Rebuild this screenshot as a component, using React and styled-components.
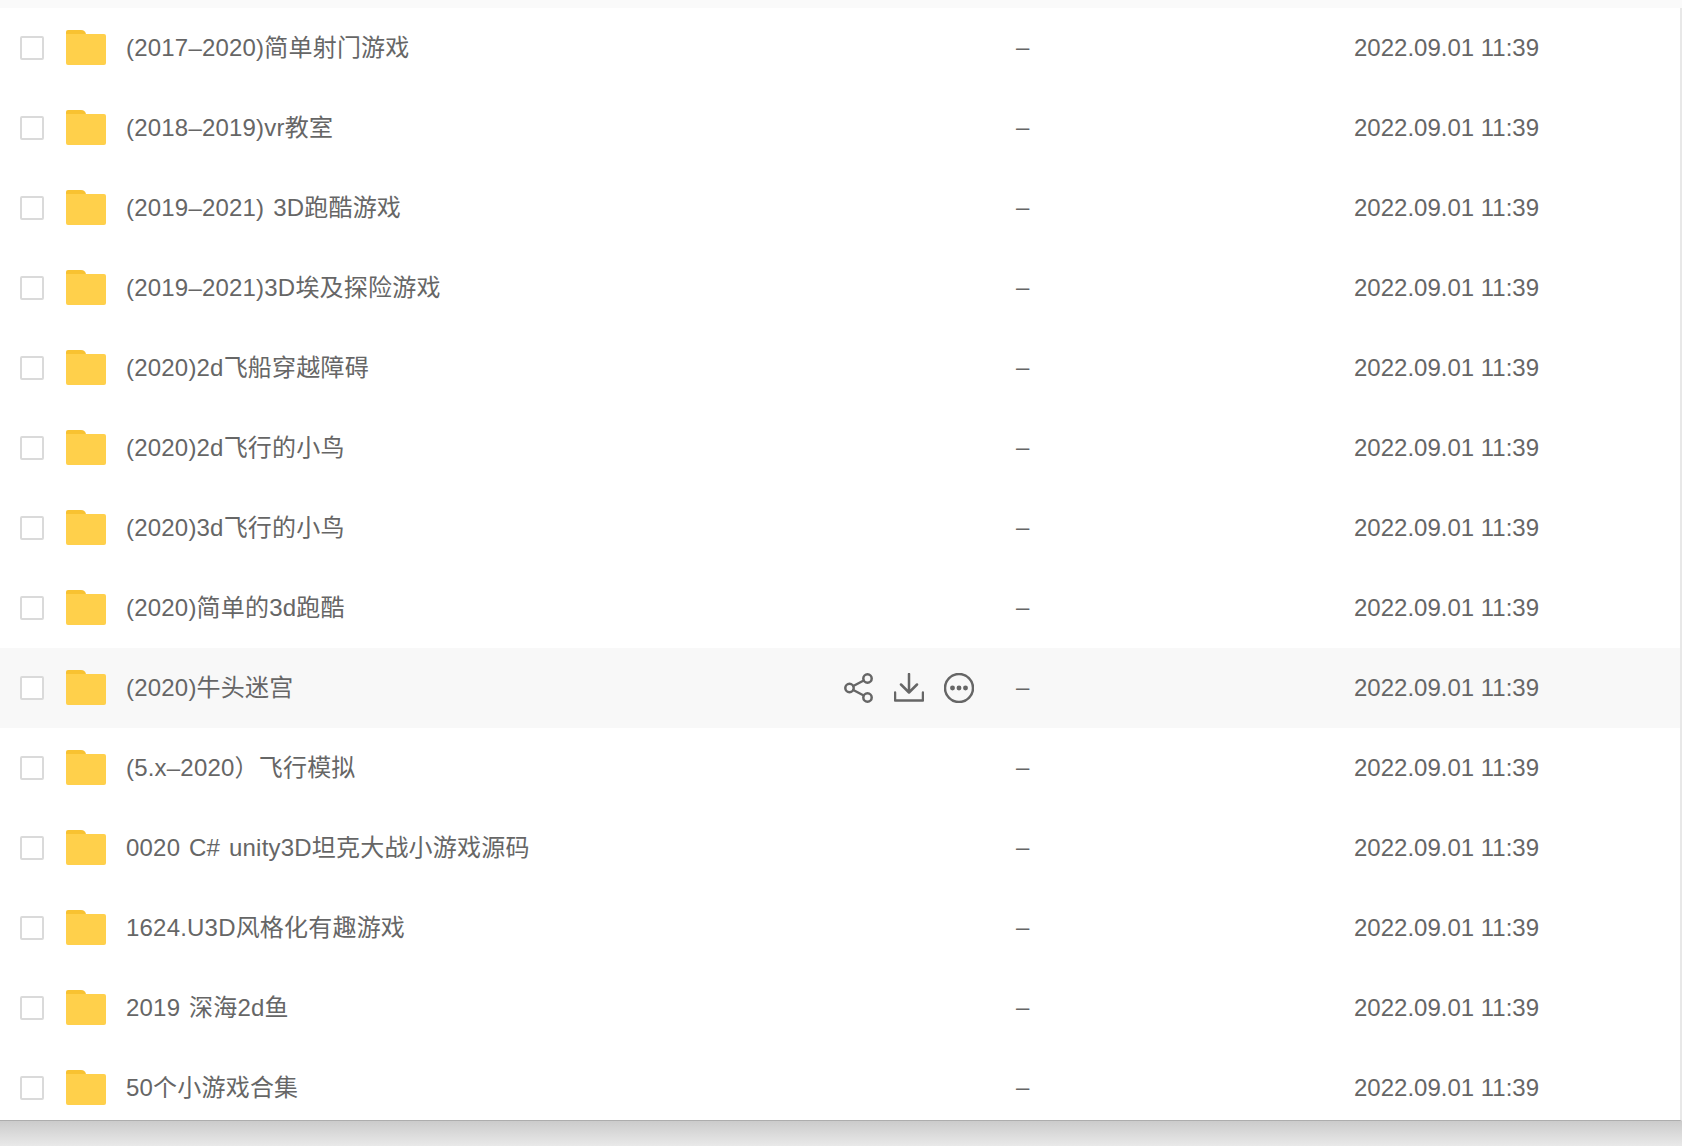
import React from 'react';
import styled, { createGlobalStyle } from 'styled-components';

const GlobalStyle = createGlobalStyle`
	html, body {
		margin: 0;
		padding: 0;
		background: #fff;
	}
	body {
		font-family: 'Liberation Sans', 'Noto Sans CJK SC', sans-serif;
	}
`;

const Page = styled.div`
	display: flex;
	flex-direction: column;
	height: 1146px;
	overflow: hidden;
`;

const TopStrip = styled.div`
	flex: 0 0 8px;
	background: #fafafa;
`;

const List = styled.div`
	flex: 0 0 1113px;
	overflow: hidden;
	background: #fff;
	border-right: 2px solid #e8e8e8;
	border-bottom: 1px solid #adadad;
	box-sizing: border-box;
`;

const BottomShade = styled.div`
	flex: 1;
	background: linear-gradient(#cbcbcb, #e9e9e9);
`;

const Row = styled.div`
	display: grid;
	grid-template-columns: 1016px 338px 1fr;
	align-items: center;
	height: 80px;
	background: ${(p) => (p.$hover ? '#f8f8f8' : 'transparent')};
	color: #666;
	font-size: 24px;
	line-height: 1;
`;

const NameCell = styled.div`
	display: flex;
	align-items: center;
	padding-left: 20px;
`;

const Checkbox = styled.span`
	box-sizing: border-box;
	width: 24px;
	height: 24px;
	border: 2px solid #dadada;
	border-radius: 2px;
	background: #fff;
`;

const FolderIcon = styled.svg`
	width: 40px;
	height: 35px;
	margin-left: 22px;
	margin-top: -1px;
`;

const Name = styled.span`
	margin-left: 20px;
	white-space: pre;
	flex: 1;
	letter-spacing: 0.2px;
	word-spacing: 2px;
`;

const Actions = styled.div`
	display: flex;
	gap: 20px;
	margin-right: 42px;
	color: #666;
`;

const ActionIcon = styled.svg`
	width: 30px;
	height: 30px;
	fill: none;
	stroke: currentColor;
	stroke-width: 2.5;
	stroke-linecap: round;
	stroke-linejoin: round;
`;

const Dash = styled.span`
	transform: translateY(-1px);
`;

const Time = styled.span``;

const Folder = () => (
	<FolderIcon viewBox='0 0 40 35'>
		<path d='M0 2a2 2 0 0 1 2-2h13c3 0 4 1 5 4h-20z' fill='#f8c231' />
		<path d='M0 4h38a2 2 0 0 1 2 2v27a2 2 0 0 1-2 2H2a2 2 0 0 1-2-2z' fill='#ffd04b' />
	</FolderIcon>
);

const ShareIcon = () => (
	<ActionIcon viewBox='0 0 30 30'>
		<circle cx='5.5' cy='15' r='4.2' />
		<circle cx='23.5' cy='5.5' r='4.2' />
		<circle cx='23.5' cy='24.5' r='4.2' />
		<path d='M9.3 13l10.4-5.5M9.3 17l10.4 5.5' />
	</ActionIcon>
);

const DownloadIcon = () => (
	<ActionIcon viewBox='0 0 30 30'>
		<path d='M15 1v18M7 11.5l8 8 8-8M1 19.5v8h28v-8' />
	</ActionIcon>
);

const MoreIcon = () => (
	<ActionIcon viewBox='0 0 30 30'>
		<circle cx='15' cy='15' r='14' />
		<circle cx='8.5' cy='15' r='1.2' />
		<circle cx='15' cy='15' r='1.2' />
		<circle cx='21.5' cy='15' r='1.2' />
	</ActionIcon>
);

const names = [
	'(2017–2020)简单射门游戏',
	'(2018–2019)vr教室',
	'(2019–2021) 3D跑酷游戏',
	'(2019–2021)3D埃及探险游戏',
	'(2020)2d飞船穿越障碍',
	'(2020)2d飞行的小鸟',
	'(2020)3d飞行的小鸟',
	'(2020)简单的3d跑酷',
	'(2020)牛头迷宫',
	'(5.x–2020）飞行模拟',
	'0020 C# unity3D坦克大战小游戏源码',
	'1624.U3D风格化有趣游戏',
	'2019 深海2d鱼',
	'50个小游戏合集',
];

export default function App() {
	return (
		<Page>
			<GlobalStyle />
			<TopStrip />
			<List>
				{names.map((name, i) => (
					<Row key={name} $hover={i === 8}>
						<NameCell>
							<Checkbox />
							<Folder />
							<Name>{name}</Name>
							{i === 8 && (
								<Actions>
									<ShareIcon />
									<DownloadIcon />
									<MoreIcon />
								</Actions>
							)}
						</NameCell>
						<Dash>–</Dash>
						<Time>2022.09.01 11:39</Time>
					</Row>
				))}
			</List>
			<BottomShade />
		</Page>
	);
}
